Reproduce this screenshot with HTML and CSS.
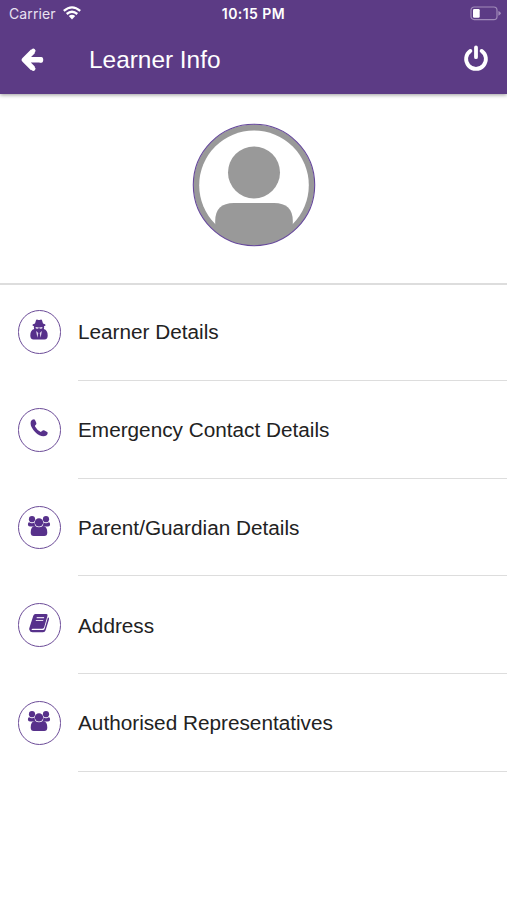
FILE: index.html
```html
<!DOCTYPE html>
<html lang="en">
<head>
<meta charset="utf-8">
<title>Learner Info</title>
<link rel="stylesheet" href="styles.css">
</head>
<body>
<svg class="defs" aria-hidden="true">
  <symbol id="users" viewBox="0 0 24 24">
    <circle cx="5" cy="5.2" r="3.1"/><circle cx="19" cy="5.2" r="3.1"/>
    <path d="M2.2 8.3Q3.4 9.3 5 9.3Q6.5 9.3 7.5 8.6Q7.6 11 8.9 12.6H3Q.9 12.6 .9 10.6Q.9 8.3 2.2 8.3ZM21.8 8.3Q20.6 9.3 19 9.3Q17.5 9.3 16.5 8.6Q16.4 11 15.1 12.6H21Q23.1 12.6 23.1 10.6Q23.1 8.3 21.8 8.3Z"/>
    <circle cx="12" cy="8.4" r="4.2"/>
    <path d="M8.1 11.9Q12 14.8 15.9 11.9Q20.3 12.2 20.3 18.4Q20.3 21.9 17.2 21.9H6.8Q3.7 21.9 3.7 18.4Q3.7 12.2 8.1 11.9Z"/>
  </symbol>
</svg>
<header class="header">
  <div class="status">
    <div class="carrier"><span>Carrier</span>
      <svg class="wifi" viewBox="0 0 18 14"><g fill="none" stroke="#fff" stroke-width="2.3"><path d="M.8 4.9Q9-2.1 17.2 4.9"/><path d="M3.7 8Q9 3.6 14.3 8"/></g><path fill="#fff" d="M5.8 10Q9 7.5 12.2 10L9 13.5Z"/></svg>
    </div>
    <div class="time">10:15 PM</div>
    <svg class="battery" viewBox="0 0 31 15"><rect x="1" y="1" width="26" height="12.6" rx="3.2" fill="none" stroke="#a18bba" stroke-width="1.2"/><rect x="3" y="3" width="6.7" height="8.7" rx="1.2" fill="#fff"/><path fill="#a18bba" d="M28.4 5Q30.8 6 30.8 7.3T28.4 9.8Z"/></svg>
  </div>
  <div class="toolbar">
    <svg class="back" viewBox="0 0 24 26"><path d="M12.9 4.3L4.4 12.8L12.9 21.3M5 12.8H21.5" fill="none" stroke="#fff" stroke-width="5.4" stroke-linejoin="round" /><path d="M13.3 3.9L12.6 4.6M13.3 21.7L12.6 21M21 12.1V13.5" fill="none" stroke="#fff" stroke-width="4.4" stroke-linecap="round"/></svg>
    <h1>Learner Info</h1>
    <svg class="power" viewBox="0 0 26 28"><path d="M7.4 6.9A9.9 9.9 0 1 0 18.6 6.9M13 3.4V13.2" fill="none" stroke="#fff" stroke-width="3.8" stroke-linecap="round"/></svg>
  </div>
</header>
<main>
  <section class="profile">
    <svg class="avatar" viewBox="0 0 124 124">
      <clipPath id="round"><circle cx="62" cy="62" r="60.5"/></clipPath>
      <g clip-path="url(#round)"><circle cx="62" cy="62" r="61" fill="#999"/><circle cx="62" cy="62.3" r="54.8" fill="#fff"/><circle cx="62" cy="49.4" r="26" fill="#999"/><path d="M23.2 124V98Q23.2 80 42 80H82Q100.8 80 100.8 98V124Z" fill="#999"/></g>
      <circle cx="62" cy="62" r="60.7" fill="none" stroke="#65479b" stroke-width="1.1"/>
    </svg>
  </section>
  <ul class="list">
    <li><span class="badge"><svg viewBox="0 0 24 24"><path d="M8 5.6L9 2.3Q9.4 1.2 10.7 1.8Q12 2.4 13.3 1.8Q14.6 1.2 15 2.3L16 5.6Q18.6 6.2 18.6 7Q18.6 7.8 17 8.3Q17.4 9.8 16.8 11Q20.7 12 20.7 17.5Q20.7 21.4 17.4 21.4H6.6Q3.3 21.4 3.3 17.5Q3.3 12 7.2 11Q6.6 9.8 7 8.3Q5.4 7.8 5.4 7Q5.4 6.2 8 5.6Z"/><path d="M8.4 9.3Q10.2 8.7 11.5 9.5H12.5Q13.8 8.7 15.6 9.3Q15.4 10.8 14 10.8Q12.7 10.8 12.3 9.9H11.7Q11.3 10.8 10 10.8Q8.6 10.8 8.4 9.3ZM9.1 13L11.3 15L10.4 19.7ZM14.9 13L12.7 15L13.6 19.7Z" fill="#e3daed"/></svg></span><span class="label">Learner Details</span></li>
    <li><span class="badge"><svg viewBox="0 0 24 24"><path d="M4 5Q5 3.2 7 3.2Q8 3.2 9.4 7.2Q9.7 8.3 8.3 9.3Q7.6 9.8 8.2 10.8Q10 14 13.4 15.8Q14.2 16.2 15 15.1Q16 13.9 17 14.3L20.2 16Q20.9 16.4 20.6 17.6Q20 20.3 16.4 20.3Q12.5 20.3 8.1 15.9Q3.6 11.3 3.6 7.5Q3.6 6 4 5Z"/></svg></span><span class="label">Emergency Contact Details</span></li>
    <li><span class="badge"><svg><use href="#users"/></svg></span><span class="label">Parent/Guardian Details</span></li>
    <li><span class="badge"><svg viewBox="0 0 24 24"><path d="M8.3 3H19.4Q21 3 20.5 4.8L17.2 16.3Q16.8 17.7 15.3 17.7H5.7Q4.5 17.7 4.6 18.4Q4.7 19.1 5.8 19.1H16Q17.2 19.1 17.6 17.8L21 6.2Q22.4 6.8 22 8.2L18.6 19.3Q18 21.3 16 21.3H5.6Q3 21.3 2.3 18.8Q2 17.8 2.5 16.5L6.3 4.8Q6.9 3 8.3 3Z"/><path d="M9.7 6.6H17.1M8.8 9.5H16.2" fill="none" stroke="#e3daed" stroke-width="1.2"/></svg></span><span class="label">Address</span></li>
    <li><span class="badge"><svg><use href="#users"/></svg></span><span class="label">Authorised Representatives</span></li>
  </ul>
</main>
</body>
</html>
```
FILE: styles.css
```css
* { box-sizing: border-box; }
body { margin: 0; background: #fff; color: #222; font-family: "Liberation Sans", Arial, sans-serif; }
svg { display: block; flex: none; }
.defs { display: none; }
.header { height: 94px; background: #5c3b85; color: #fff; box-shadow: 0 1px 4px rgba(0, 0, 0, .4); }
.status { height: 27px; padding: 0 6px 0 9px; display: grid; grid-template-columns: 1fr auto 1fr; align-items: center; font: 14px/27px Inter, sans-serif; }
.carrier { display: flex; align-items: center; gap: 7px; color: #e9e1f1; letter-spacing: .1px; }
.wifi { width: 18px; height: 14px; margin-top: -1px; }
.time { font-weight: 600; font-size: 14px; letter-spacing: .45px; margin-right: 3px; }
.battery { width: 31px; height: 15px; justify-self: end; }
.toolbar { height: 66px; display: flex; align-items: center; padding: 0 18px 0 20px; }
.back { width: 24px; height: 26px; }
h1 { flex: 1; margin: 0 0 0 45px; font-size: 24.4px; font-weight: 400; line-height: 30px; }
.power { width: 26px; height: 28px; margin-top: -4px; }
.profile { height: 191px; padding-top: 29px; border-bottom: 2px solid #ddd; display: flex; justify-content: center; }
.avatar { width: 124px; height: 124px; }
.list { list-style: none; margin: 0; padding: 0; }
.list li { height: 97.7px; padding-left: 17.5px; display: flex; gap: 17px; }
.list li:first-child { height: 96px; }
.badge { width: 43.5px; height: 43.5px; border: 1.5px solid #6c4c98; border-radius: 50%; align-self: center; display: flex; justify-content: center; padding-top: 7px; }
.list li:first-child .badge { margin-bottom: 2px; }
.badge svg { width: 24px; height: 24px; fill: #57318b; }
.label { flex: 1; display: flex; align-items: center; padding-top: 2px; border-bottom: 1.5px solid #ddd; font-size: 20.75px; }
.list li:first-child .label { padding-top: 0; padding-bottom: 1px; }
```
